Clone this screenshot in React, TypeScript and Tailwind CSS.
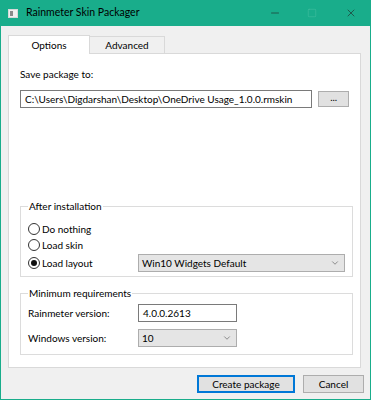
import { ChevronDown, Minus, Square, X } from "lucide-react";

const font = { fontFamily: 'Lato, "Open Sans", sans-serif' };

const Radio = ({ label, checked }: { label: string; checked?: boolean }) => (
  <div className="flex h-[16px] items-center">
    <span className="flex h-[12px] w-[12px] items-center justify-center rounded-full border border-[#333] bg-white">
      {checked && <span className="h-[6px] w-[6px] rounded-full bg-[#111]" />}
    </span>
    <span className="ml-[2px]">{label}</span>
  </div>
);

const Select = ({ value, className }: { value: string; className: string }) => (
  <div
    className={`flex h-[18px] items-center justify-between border border-[#adadad] bg-[#e5e5e5] pl-[3px] pr-[4px] ${className}`}
  >
    <span>{value}</span>
    <ChevronDown size={10} strokeWidth={1.5} className="text-[#555]" />
  </div>
);

const App = () => {
  return (
    <div
      className="flex h-[400px] w-[371px] flex-col whitespace-nowrap border border-t-0 border-[#19ad8b] bg-[#f0f0f0] text-[10px] text-black"
      style={font}
    >
      <div className="flex h-[26px] shrink-0 items-center bg-[#19ad8b] pl-[7px] text-[10.5px]">
        <div className="flex h-[9px] w-[10px] items-center border border-[#d8d8d8] bg-[#f0f0f0]">
          <span className="ml-[1px] h-[5px] w-[3px] bg-[#8a8a8a]" />
        </div>
        <span className="ml-[8px] flex-1 text-black">Rainmeter Skin Packager</span>
        <Minus size={12} strokeWidth={1.2} className="mr-[26px] text-[#222]" />
        <Square size={10} strokeWidth={1} className="mr-[28px] text-[#55c4aa]" />
        <X size={12} strokeWidth={1.2} className="mr-[13px] text-[#222]" />
      </div>

      <div className="flex flex-1 flex-col px-[7px] pt-[8px]">
        <div className="flex h-[19px] items-end">
          <div className="relative z-10 -mb-px flex h-[19px] w-[82px] items-center justify-center border border-b-0 border-[#d9d9d9] bg-white">
            Options
          </div>
          <div className="flex h-[17px] w-[75px] items-center justify-center border border-b-0 border-l-0 border-[#d9d9d9] bg-[#f0f0f0]">
            Advanced
          </div>
        </div>

        <div className="flex h-[315px] w-[353px] flex-col border border-[#d9d9d9] bg-white px-[11px]">
          <div className="mt-[12px] h-[16px] leading-[16px]">Save package to:</div>
          <div className="mt-[8px] flex items-center">
            <div className="flex h-[18px] w-[296px] items-center border border-[#7a7a7a] pl-[4px]">
              C:\Users\Digdarshan\Desktop\OneDrive Usage_1.0.0.rmskin
            </div>
            <div className="ml-[6px] flex h-[16px] w-[31px] items-center justify-center border border-[#adadad] bg-[#e1e1e1] pb-[3px]">
              ...
            </div>
          </div>

          <fieldset className="mt-[91px] h-[78px] w-[333px] border border-[#dcdcdc] px-[7px]">
            <legend className="px-[1px] leading-[14px]">After installation</legend>
            <div className="mt-[8px]">
              <Radio label="Do nothing" />
              <Radio label="Load skin" />
              <div className="mt-[1px] flex items-center justify-between">
                <Radio label="Load layout" checked />
                <Select value="Win10 Widgets Default" className="w-[207px]" />
              </div>
            </div>
          </fieldset>

          <fieldset className="mt-[9px] h-[69px] w-[333px] border border-[#dcdcdc] px-[7px]">
            <legend className="px-[1px] leading-[14px]">Minimum requirements</legend>
            <div className="mt-[4px] flex items-center">
              <span className="w-[110px]">Rainmeter version:</span>
              <div className="flex h-[18px] w-[99px] items-center border border-[#7a7a7a] pl-[4px]">
                4.0.0.2613
              </div>
            </div>
            <div className="mt-[7px] flex items-center">
              <span className="w-[110px]">Windows version:</span>
              <Select value="10" className="w-[99px]" />
            </div>
          </fieldset>
        </div>

        <div className="mt-[7px] flex justify-end">
          <div className="flex h-[18px] w-[98px] items-center justify-center border border-[#0078d7] bg-[#e1e1e1] shadow-[inset_0_0_0_1px_#0078d7]">
            Create package
          </div>
          <div className="ml-[8px] -mr-[1px] flex h-[18px] w-[61px] items-center justify-center border border-[#adadad] bg-[#e1e1e1]">
            Cancel
          </div>
        </div>
      </div>
    </div>
  );
};

export default App;
